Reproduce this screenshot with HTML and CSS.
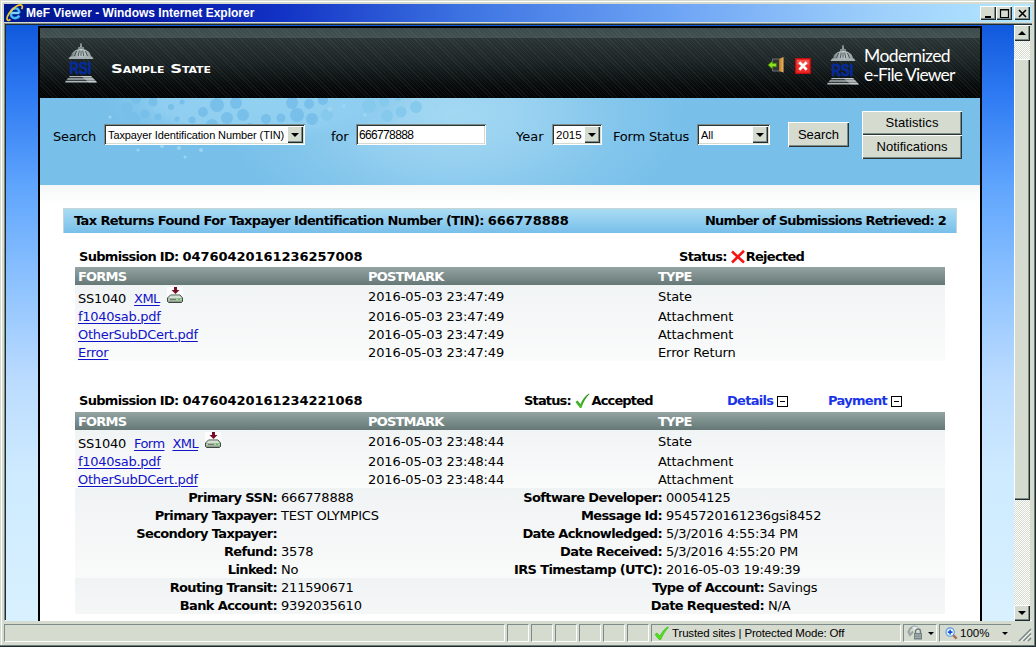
FILE: index.html
```html
<!DOCTYPE html>
<html lang="en">
<head>
<meta charset="utf-8">
<title>MeF Viewer - Windows Internet Explorer</title>
<link rel="stylesheet" href="styles.css">
</head>
<body>
<svg class="defs" width="0" height="0">
  <defs>
    <linearGradient id="silver" x1="0" y1="0" x2="1" y2="0"><stop offset="0" stop-color="#6f7d80"/><stop offset=".5" stop-color="#c9d1d2"/><stop offset="1" stop-color="#8d999b"/></linearGradient>
    <linearGradient id="door" x1="0" y1="0" x2="1" y2="0"><stop offset="0" stop-color="#b8741f"/><stop offset="1" stop-color="#f0b968"/></linearGradient>
    <linearGradient id="tick" x1="0" y1="0" x2="0" y2="1"><stop offset="0" stop-color="#2c8a1c"/><stop offset="1" stop-color="#4cc02c"/></linearGradient>
    <symbol id="rsi" viewBox="0 0 32 40">
      <path d="M15.500 0h1l.6 4h-2.200z" fill="#98a5a8"/>
      <path d="M13 4h6v3h-6z" fill="#7f8c8f"/>
      <path d="M6 14c0-5 4.500-8 10-8s10 3 10 8z" fill="url(#silver)"/>
      <path d="M9.500 13l2-5M13.300 13l1-5.500M18.700 13l-1-5.500M22.500 13l-2-5M16 13V7.500" stroke="#3b484b" stroke-width=".9"/>
      <path d="M5 13.500h22l1.500 2.500h-25z" fill="#a5b0b2"/>
      <text x="4.500" y="31.200" textLength="22" lengthAdjust="spacingAndGlyphs" class="rsi-text">RSI</text>
      <path d="M5 33h21l1.500 1.300H3.500zM3 35.200h25l2 1.500H1.500zM.8 37.700h30l1.200 1.700H0z" fill="#aeb8ba"/>
      <path d="M16 33l10 0 6 6.400-8 0z" fill="#e0e5e5" opacity=".45"/>
    </symbol>
    <symbol id="disk" viewBox="0 0 16 16">
      <rect width="16" height="16" fill="#fcfcfc"/>
      <path d="M3.500 8h9.500l2.500 3v3.500l-1 1h-13l-1-1V11z" fill="#8fa08e" stroke="#2d3a32" stroke-width=".9"/>
      <path d="M3.500 8.500h9.300l2 2.500H1.200z" fill="#d4dfd4"/>
      <path d="M1 11.500h14v2H1z" fill="#bccabb"/><path d="M11 11.500h2v1.500h-2z" fill="#36d83a"/><path d="M3 12.500h6" stroke="#6b7b6b"/>
      <path d="M7 0h3v3h2.500l-4 4-4-4H7z" fill="#760b26"/>
    </symbol>
  </defs>
</svg>
<div class="window">
  <header class="titlebar">
    <svg class="ie" viewBox="0 0 18 18" width="18" height="18">
      <path d="M13.500 9H5.200M13.300 9c0-3-1.700-4.700-4.200-4.700S4.800 6.500 4.800 9.400s1.900 4.700 4.400 4.700c1.900 0 3.300-.8 4-2.500" fill="none" stroke="#49b8f4" stroke-width="2.600"/>
      <path d="M13 9H5.200M6 6.500c.8-1.300 1.700-1.700 3-1.700" fill="none" stroke="#b6ebff" stroke-width="1"/>
      <path d="M4.500 15.500C1 18-.5 15 3 9.500 6.500 4 13-.5 15.700 1.300c1 .8.700 2.300 0 3.800" fill="none" stroke="#f6c92d" stroke-width="1.700"/>
    </svg>
    <span class="title">MeF Viewer - Windows Internet Explorer</span>
    <div class="winbtns">
      <span class="wb"><svg width="13" height="11" viewBox="0 0 13 11"><path d="M3 8h6v2H3z"/></svg></span>
      <span class="wb"><svg width="13" height="11" viewBox="0 0 13 11"><path d="M2.500 1.500h8v8h-8zM2 2h9" fill="none" stroke="#000" stroke-width="1.200"/></svg></span>
      <span class="wb close"><svg width="13" height="11" viewBox="0 0 13 11"><path d="M3 2l7 7M10 2l-7 7" fill="none" stroke="#000" stroke-width="1.600"/></svg></span>
    </div>
  </header>
  <div class="client">
    <div class="viewport">
      <main class="page">
        <div class="banner">
          <svg class="logo" width="32" height="40"><use href="#rsi"/></svg>
          <svg class="state" width="104" height="16"><text x="1" y="12.500" textLength="100" lengthAdjust="spacingAndGlyphs">Sample State</text></svg>
          <svg class="exit" width="17" height="16" viewBox="0 0 17 16"><path d="M4.500 2H13v12H4.500z" fill="#2f3538" stroke="#6b7072"/><path d="M11 2l4.500-2v15.500L11 14z" fill="url(#door)"/><path d="M0 8l4.500-4v2.300h4v3.500h-4V12z" fill="#8ee01c" stroke="#37750c" stroke-width=".7"/></svg>
          <svg class="quit" width="16" height="16" viewBox="0 0 16 16"><path d="M.7.700h14.600v14.600H.7z" fill="#ee2b26" stroke="#c40b10" stroke-width="1.200"/><path d="M1.800 1.800h12.400v5H1.800z" fill="#f86a63" opacity=".6"/><path d="M4.300 4.300l7.400 7.400M11.700 4.300l-7.400 7.400" stroke="#fff" stroke-width="2.700"/></svg>
          <svg class="logo2" width="32" height="40"><use href="#rsi"/></svg>
          <div class="product"><span class="p1">Modernized</span><span class="p2">e-File Viewer</span></div>
        </div>
        <form class="search">
          <svg class="dots" width="420" height="70" viewBox="0 0 420 70">
            <defs><radialGradient id="wash"><stop offset="0" stop-color="#93d1f1"/><stop offset=".65" stop-color="#8fcef0"/><stop offset="1" stop-color="#82c5ec" stop-opacity="0"/></radialGradient></defs>
            <ellipse cx="180" cy="2" rx="155" ry="48" fill="url(#wash)"/>
            <g fill="#78bfe9"><circle cx="47" cy="10" r="6"/><circle cx="56" cy="1" r="5"/><circle cx="52" cy="22" r="8"/><circle cx="65" cy="16" r="4.500"/><circle cx="60" cy="30" r="5"/><circle cx="78" cy="19" r="3.500"/><circle cx="73" cy="4" r="4.500"/><circle cx="91" cy="9" r="3"/><circle cx="97" cy="21" r="2.500"/><circle cx="102" cy="4" r="2.500"/><circle cx="112" cy="22" r="3.500"/><circle cx="123" cy="14" r="5"/><circle cx="137" cy="7" r="7"/><circle cx="147" cy="20" r="6"/><circle cx="132" cy="27" r="6"/><circle cx="156" cy="5" r="6"/><circle cx="163" cy="17" r="6"/><circle cx="170" cy="31" r="6"/><circle cx="186" cy="21" r="5"/><circle cx="201" cy="20" r="4.500"/><circle cx="212" cy="5" r="6"/><circle cx="217" cy="17" r="7"/><circle cx="229" cy="6" r="5"/><circle cx="232" cy="21" r="6"/><circle cx="243" cy="2" r="5"/></g>
            <g fill="#85c9ed"><circle cx="247" cy="17" r="6"/><circle cx="289" cy="8" r="7"/><circle cx="304" cy="4" r="5"/><circle cx="307" cy="18" r="6"/><circle cx="321" cy="14" r="5.500"/><circle cx="336" cy="9" r="6"/><circle cx="318" cy="0" r="3"/></g>
            <g fill="#9bd5f2"><circle cx="30" cy="19" r="1.500"/><circle cx="35" cy="32" r="1.500"/><circle cx="68" cy="42" r="1.500"/><circle cx="82" cy="48" r="2"/><circle cx="99" cy="50" r="2"/><circle cx="121" cy="52" r="2"/><circle cx="58" cy="52" r="1.500"/><circle cx="105" cy="59" r="1.500"/><circle cx="250" cy="11" r="2.500"/><circle cx="264" cy="8" r="2"/><circle cx="285" cy="17" r="2"/><circle cx="356" cy="9" r="2"/><circle cx="360" cy="23" r="1.500"/></g>
          </svg>
          <label class="l-search">Search</label>
          <div class="field s-type"><span>Taxpayer Identification Number (TIN)</span><i class="drop"></i></div>
          <label class="l-for">for</label>
          <div class="field s-value"><span>666778888</span></div>
          <label class="l-year">Year</label>
          <div class="field s-year"><span>2015</span><i class="drop"></i></div>
          <label class="l-status">Form Status</label>
          <div class="field s-status"><span>All</span><i class="drop"></i></div>
          <div class="btn b-search">Search</div>
          <div class="stack"><div class="btn">Statistics</div><div class="btn n">Notifications</div></div>
        </form>
        <section class="results">
          <div class="summary"><span class="sum-a">Tax Returns Found For Taxpayer Identification Number (TIN): <em>666778888</em></span><span class="sum-b">Number of Submissions Retrieved: 2</span></div>

          <article class="sub first">
            <div class="subhead"><span class="sid">Submission ID: <em>04760420161236257008</em></span>
              <span class="st rej">Status: <svg width="14" height="14" viewBox="0 0 14 14"><path d="M1 1.500l12 11M13 .8L1 12.500" stroke="#f31515" stroke-width="2.600" fill="none"/></svg>Rejected</span></div>
            <div class="row head"><span>FORMS</span><span>POSTMARK</span><span>TYPE</span></div>
            <div class="rows">
              <div class="row tall"><span class="links">SS1040 <a>XML</a> <svg width="16" height="16"><use href="#disk"/></svg></span><span>2016-05-03 23:47:49</span><span>State</span></div>
              <div class="row"><span><a>f1040sab.pdf</a></span><span>2016-05-03 23:47:49</span><span>Attachment</span></div>
              <div class="row"><span><a>OtherSubDCert.pdf</a></span><span>2016-05-03 23:47:49</span><span>Attachment</span></div>
              <div class="row"><span><a>Error</a></span><span>2016-05-03 23:47:49</span><span>Error Return</span></div>
            </div>
          </article>

          <article class="sub second">
            <div class="subhead"><span class="sid">Submission ID: <em>04760420161234221068</em></span>
              <span class="st acc">Status: <svg width="15" height="16" viewBox="0 0 15 16"><path d="M.5 9l2-1.500L5.500 11C7.500 6.500 10 3 14 .5l.5.500C10.500 5 8.500 9 6.500 15H5z" fill="url(#tick)"/></svg>Accepted</span>
              <span class="tog det">Details<i></i></span><span class="tog pay">Payment<i></i></span></div>
            <div class="row head"><span>FORMS</span><span>POSTMARK</span><span>TYPE</span></div>
            <div class="rows">
              <div class="row tall"><span class="links">SS1040 <a>Form</a> <a>XML</a> <svg width="16" height="16"><use href="#disk"/></svg></span><span>2016-05-03 23:48:44</span><span>State</span></div>
              <div class="row"><span><a>f1040sab.pdf</a></span><span>2016-05-03 23:48:44</span><span>Attachment</span></div>
              <div class="row"><span><a>OtherSubDCert.pdf</a></span><span>2016-05-03 23:48:44</span><span>Attachment</span></div>
            </div>
            <div class="facts">
              <b>Primary SSN:</b><span>666778888</span><b>Software Developer:</b><span>00054125</span>
              <b>Primary Taxpayer:</b><span>TEST OLYMPICS</span><b>Message Id:</b><span>9545720161236gsi8452</span>
              <b>Secondory Taxpayer:</b><span></span><b>Date Acknowledged:</b><span>5/3/2016 4:55:34 PM</span>
              <b>Refund:</b><span>3578</span><b>Date Received:</b><span>5/3/2016 4:55:20 PM</span>
              <b>Linked:</b><span>No</span><b>IRS Timestamp (UTC):</b><span>2016-05-03 19:49:39</span>
            </div>
            <div class="facts payment">
              <b>Routing Transit:</b><span>211590671</span><b>Type of Account:</b><span>Savings</span>
              <b>Bank Account:</b><span>9392035610</span><b>Date Requested:</b><span>N/A</span>
            </div>
          </article>
        </section>
      </main>
    </div>
    <div class="scroll"><span class="sb up"></span><span class="thumb"></span><span class="space"></span><span class="sb down"></span></div>
  </div>
  <footer class="status">
    <span class="pane p0"></span><span class="pane"></span><span class="pane"></span><span class="pane"></span><span class="pane"></span><span class="pane"></span><span class="pane"></span>
    <span class="pane zone"><svg width="15" height="15" viewBox="0 0 15 15"><path d="M1 8.500l2-1.500 3 3C8 6 10.500 3 14 .8l.3.700C11 5 9 8.500 6.800 13.500H5z" fill="#4fe01d" stroke="#33b512" stroke-width=".6"/></svg><span class="zt">Trusted sites | Protected Mode: Off</span></span>
    <span class="pane lock"><svg width="18" height="16" viewBox="0 0 18 16"><path d="M3 8a5.500 5.500 0 0 1 9-5M2 6l2 4 3-3.500" fill="none" stroke="#9aa5a5" stroke-width="2"/><path d="M6 2a6 6 0 0 1 8 3l-4 2z" fill="#e3eaea"/><path d="M9.500 8V6.500a2.500 2.500 0 0 1 5 0V8" fill="none" stroke="#6c7979" stroke-width="1.400"/><path d="M8 8h8v6.500H8z" fill="#748383"/><path d="M9 10h6M9 12.200h6" stroke="#b9c3c3"/></svg><i class="tri"></i></span>
    <span class="pane zoom"><svg width="13" height="13" viewBox="0 0 14 14"><path d="M8.500 8.500l4 4" stroke="#a77345" stroke-width="2.600"/><circle cx="5.500" cy="5.500" r="4.500" fill="#e5f4ff" stroke="#5c96e2" stroke-width="1.200"/><path d="M3 5.500h5M5.500 3v5" stroke="#1552d3" stroke-width="1.700"/></svg><span class="zt pct">100%</span><i class="tri"></i></span>
    <svg class="grip" width="14" height="14" viewBox="0 0 14 14"><path d="M1 13L13 1M5.500 13L13 5.500M10 13l3-3" stroke="#78898a" stroke-width="1.500"/><path d="M2.500 13.500l11-11M7 13.500L13.500 7" stroke="#fff" stroke-width=".8"/></svg>
  </footer>
</div>
</body>
</html>
```

FILE: styles.css
```css
* { box-sizing: border-box; }
body { margin: 0; width: 1036px; height: 647px; overflow: hidden; font-family: "DejaVu Sans", Verdana, sans-serif; font-size: 13px; color: #000; }
.defs { position: absolute; }
i, em { font-style: normal; }
svg { flex: none; }
.window { width: 1036px; height: 647px; background: #d6dbd0; display: flex; flex-direction: column; padding: 4px 4px 3px; box-shadow: inset -1px -1px #1f2b2c, inset -2px -2px #6d7b7b, inset 1px 1px #d6dbd0, inset 2px 2px #fff; }

.titlebar { height: 18px; display: flex; align-items: center; background: linear-gradient(90deg, #001a8c 0, #0416a4 12%, #1233c5 27%, #3e74e2 45%, #70a6f5 66%, #9dcffb 85%, #b3e8ff 100%); padding: 0 2px; }
.ie { margin-right: 2px; }
.title { flex: 1; font: bold 12px "Liberation Sans", Arial, sans-serif; color: #fff; white-space: nowrap; }
.winbtns { display: flex; }
.wb { width: 16px; height: 14px; background: #d6dbd0; display: flex; align-items: center; justify-content: center; box-shadow: inset 1px 1px #fff, inset -1px -1px #1f2b2c, inset -2px -2px #7d8b8a; }
.wb.close { margin-left: 2px; }

.client { height: 598px; margin-top: 1px; display: flex; border-top: 1px solid #7d8b8a; border-left: 1px solid #7d8b8a; border-bottom: 1px solid #fff; padding: 1px 1px 0 1px; box-shadow: inset 1px 1px #1f2b2c; }
.viewport { width: 1008px; height: 596px; overflow: hidden; padding: 1px 32px 0; background: linear-gradient(180deg, #1159dd 0, #2f7bf3 12%, #5fa5fd 27%, #92c5ff 45%, #bcdcff 60%, #cdeaff 75%, #d9f1ff 100%); }
.page { width: 944px; height: 596px; border: 2px solid #000; border-bottom: 0; background: #fff; }

.banner { height: 70px; display: flex; align-items: flex-start; padding-left: 25px; background: repeating-linear-gradient(45deg, rgba(130,150,150,.1) 0, rgba(130,150,150,.1) 1px, transparent 1px, transparent 3px), linear-gradient(180deg, #3d4a4b 0, #435051 10px, #2b3536 10px, #1a2122 36px, #080c0c 56px, #020303 100%); }
.rsi-text { font: bold 16px "Liberation Sans", Arial, sans-serif; fill: #052b9b; stroke: #052b9b; stroke-width: .7px; }
.logo { margin-top: 15px; }
.state { margin: 32px 0 0 13px; font: bold 12px "DejaVu Sans", sans-serif; font-variant: small-caps; fill: #fff; }
.exit { margin: 29px 0 0 554px; }
.quit { margin: 30px 0 0 10px; }
.logo2 { margin: 17px 0 0 16px; }
.product { margin: 18px 0 0 5px; display: flex; flex-direction: column; font: 17.500px/19px Lato, "Open Sans", sans-serif; color: #fff; white-space: nowrap; }
.p1 { letter-spacing: -.6px; }
.p2 { letter-spacing: -.85px; }

.search { position: relative; height: 87px; display: flex; align-items: flex-start; background: radial-gradient(ellipse 230px 130px at 415px 15px, #a3d8f2 0, #98d1f0 35%, #84c6ec 70%, rgba(120,192,234,0) 100%), #78c0ea; }
.dots { position: absolute; left: 40px; top: 0; }
.search > :not(.dots) { position: relative; }
label { margin-top: 31px; line-height: 16px; white-space: nowrap; }
.l-search { width: 51px; margin-left: 13px; letter-spacing: -.3px; }
.l-for { width: 25px; margin-left: 26px; letter-spacing: -.1px; }
.l-year { width: 36px; margin-left: 30px; }
.l-status { width: 84px; margin-left: 11px; letter-spacing: -.2px; }
.field { height: 21px; margin-top: 26px; background: #fff; display: flex; align-items: center; justify-content: space-between; padding: 2px 2px 2px 4px; font: 12px "Liberation Sans", Arial, sans-serif; white-space: nowrap; box-shadow: inset 1px 1px #7d8b8a, inset -1px -1px #fff, inset 2px 2px #2a3536, inset -2px -2px #d6dbd0; }
.s-type { width: 201px; font-size: 11px; letter-spacing: -.1px; }
.s-value { width: 130px; padding-left: 3px; letter-spacing: -.65px; }
.s-year { width: 50px; font-size: 11.500px; }
.s-status { width: 73px; font-size: 11px; }
.drop { flex: none; width: 16px; height: 17px; background: #d6dbd0; box-shadow: inset 1px 1px #fff, inset -1px -1px #1f2b2c, inset -2px -2px #7d8b8a; display: flex; align-items: center; justify-content: center; }
.drop::after { content: ""; border: 4px solid transparent; border-top-color: #000; border-bottom: 0; }
.btn { background: #d6dbd0; font: 13px "Liberation Sans", Arial, sans-serif; display: flex; align-items: center; justify-content: center; padding-bottom: 1px; box-shadow: inset 1px 1px #fff, inset -1px -1px #2a3536, inset -2px -2px #7d8b8a; }
.b-search { width: 61px; height: 25px; margin: 24px 0 0 18px; }
.stack { margin: 13px 0 0 13px; }
.stack .btn { width: 100px; height: 24px; padding-bottom: 2px; letter-spacing: .1px; }
.stack .n { letter-spacing: 0; }

.results { padding: 23px 23px 0; background: linear-gradient(180deg, #f6f8f8 0, #fff 20px); }
.summary { height: 25px; width: 894px; display: flex; justify-content: space-between; align-items: center; padding: 0 10px 2px; font-weight: bold; white-space: nowrap; background: linear-gradient(180deg, #aadcf3, #78bfea); border: 1px solid #c5d4d4; border-width: 1px 1px 0; }
.sum-a { letter-spacing: -.62px; }
.sum-b { letter-spacing: -.8px; }
em { letter-spacing: -.04px; }
.sub { width: 870px; margin-left: 12px; }
.subhead { font-weight: bold; display: flex; line-height: 18px; height: 19px; padding-left: 4px; white-space: nowrap; letter-spacing: -.7px; }
.first { padding-top: 15px; }
.second { padding-top: 31px; }
.second .subhead { height: 20px; }
.sid { width: 284px; }
.st { display: flex; align-items: center; height: 18px; white-space: pre; }
.st svg { margin-right: 1px; }
.rej { margin-left: 316px; }
.acc { margin-left: 161px; width: 128px; letter-spacing: -.85px; }
.acc svg { margin-left: 1px; }
.tog { display: flex; align-items: center; height: 18px; color: #1a35e8; }
.det { margin-left: 75px; width: 101px; }
.tog i { width: 11px; height: 11px; border: 1px solid #000; margin-left: 4px; display: flex; align-items: center; justify-content: center; }
.tog i::after { content: ""; width: 5px; height: 1px; background: #000; }
.row { display: grid; grid-template-columns: 290px 290px 1fr; height: 18px; line-height: 20px; padding-left: 3px; white-space: nowrap; }
.row.tall { height: 22px; line-height: 23px; }
.head { color: #fff; font-weight: bold; letter-spacing: -.8px; background: linear-gradient(180deg, #93a4a3, #667876); }
.rows { background: linear-gradient(180deg, #f1f4f5, #fafbfb); letter-spacing: -.1px; }
.links { display: flex; gap: 8px; line-height: 27px; letter-spacing: -.25px; }
.links svg { margin-top: 2px; margin-left: -1px; }
a { color: #1212c8; letter-spacing: -.27px; text-decoration: underline; text-underline-offset: 2px; text-decoration-thickness: 1px; }
.links a { letter-spacing: -.6px; }
.facts { display: grid; grid-template-columns: 202px 183px 202px 1fr; grid-auto-rows: 18px; line-height: 20px; white-space: nowrap; background: linear-gradient(180deg, #f0f3f4, #f9fafa); }
.facts b { text-align: right; letter-spacing: -.63px; }
.facts span { padding-left: 4px; letter-spacing: -.2px; }
.payment { grid-template-columns: 202px 183px 304px 1fr; background: linear-gradient(180deg, #f0f3f4, #f5f7f7); }

.scroll { width: 16px; height: 596px; display: flex; flex-direction: column; background: repeating-conic-gradient(#fff 0 25%, #d6dbd0 0 50%) 0 0 / 2px 2px; }
.sb, .thumb { background: #d6dbd0; box-shadow: inset 1px 1px #fff, inset -1px -1px #1f2b2c, inset -2px -2px #7d8b8a; }
.sb { height: 16px; display: flex; align-items: center; justify-content: center; flex: none; }
.up::after { content: ""; border: 4px solid transparent; border-bottom-color: #000; border-top: 0; }
.down::after { content: ""; border: 4px solid transparent; border-top-color: #000; border-bottom: 0; }
.thumb { margin-top: 18px; height: 441px; flex: none; }
.space { flex: 1; }

.status { height: 21px; margin-top: 2px; display: flex; gap: 2px; }
.pane { width: 22px; height: 18px; margin-top: 1px; border: 1px solid #7d8b8a; border-right-color: #fff; border-bottom-color: #fff; display: flex; align-items: center; flex: none; white-space: nowrap; }
.p0 { width: 501px; }
.zone { width: 250px; padding-left: 2px; }
.zt { margin-left: 3px; font: 11.500px "Liberation Sans", Arial, sans-serif; letter-spacing: -.15px; }
.pct { margin-left: 2px; letter-spacing: 0; }
.lock { width: 34px; padding-left: 2px; }
.zoom { width: 72px; padding-left: 5px; border-right: 0; }
.tri { border: 3px solid transparent; border-top-color: #000; border-bottom: 0; margin-left: 4px; }
.zoom .tri { margin-left: 13px; }
.grip { margin-left: auto; margin-top: 5px; }
```
